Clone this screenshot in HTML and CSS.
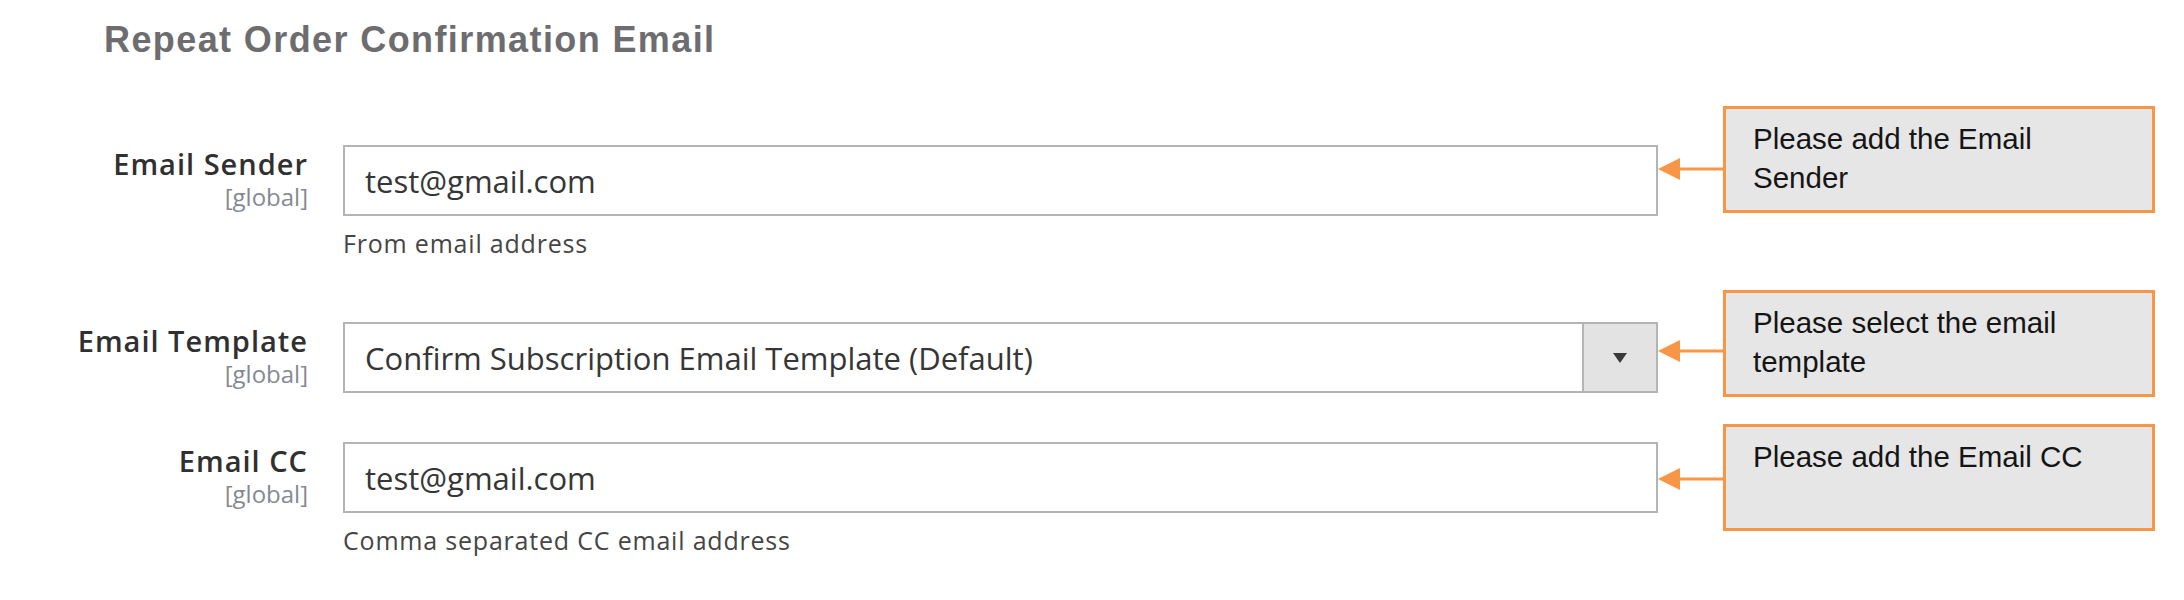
FILE: index.html
```html
<!DOCTYPE html>
<html lang="en">
<head>
<meta charset="utf-8">
<title>Repeat Order Confirmation Email</title>
<link rel="stylesheet" href="styles.css">
</head>
<body>
<div class="page">
  <h2 class="title">Repeat Order Confirmation Email</h2>

  <div class="form">
    <div class="field field-sender">
      <div class="label-col">
        <div class="label">Email Sender</div>
        <div class="scope">[global]</div>
      </div>
      <div class="control">
        <div class="input">test@gmail.com</div>
        <div class="note">From email address</div>
      </div>
      <div class="annot annot-sender">
        <svg class="arrow" width="65" height="24" viewBox="0 0 65 24"><line x1="18" y1="12" x2="65" y2="12" stroke="#f79646" stroke-width="3"/><polygon points="0,12 22,1 22,23" fill="#f79646"/></svg>
        <div class="callout">Please add the Email Sender</div>
      </div>
    </div>

    <div class="field field-template">
      <div class="label-col">
        <div class="label">Email Template</div>
        <div class="scope">[global]</div>
      </div>
      <div class="control">
        <div class="select">
          <div class="select-value">Confirm Subscription Email Template (Default)</div>
          <div class="select-btn"><span class="caret"></span></div>
        </div>
      </div>
      <div class="annot annot-template">
        <svg class="arrow" width="65" height="24" viewBox="0 0 65 24"><line x1="18" y1="12" x2="65" y2="12" stroke="#f79646" stroke-width="3"/><polygon points="0,12 22,1 22,23" fill="#f79646"/></svg>
        <div class="callout">Please select the email template</div>
      </div>
    </div>

    <div class="field field-cc">
      <div class="label-col">
        <div class="label">Email CC</div>
        <div class="scope">[global]</div>
      </div>
      <div class="control">
        <div class="input">test@gmail.com</div>
        <div class="note">Comma separated CC email address</div>
      </div>
      <div class="annot annot-cc">
        <svg class="arrow" width="65" height="24" viewBox="0 0 65 24"><line x1="18" y1="12" x2="65" y2="12" stroke="#f79646" stroke-width="3"/><polygon points="0,12 22,1 22,23" fill="#f79646"/></svg>
        <div class="callout">Please add the Email CC</div>
      </div>
    </div>
  </div>
</div>
</body>
</html>
```

FILE: styles.css
```css
html, body {
  margin: 0;
  padding: 0;
  background: #ffffff;
}

.page {
  width: 2184px;
  height: 600px;
  overflow: hidden;
}

.title {
  margin: 0;
  padding: 22px 0 0 104px;
  font-family: "Liberation Sans", Arial, sans-serif;
  font-weight: bold;
  font-size: 36px;
  line-height: 36px;
  letter-spacing: 1.4px;
  color: #6d6d6f;
}

.form {
  margin-top: 87px;
  display: flex;
  flex-direction: column;
}

.field {
  display: flex;
  align-items: flex-start;
  margin-bottom: 49px;
}

.label-col {
  width: 308px;
  text-align: right;
  font-family: "Open Sans", sans-serif;
}

.label {
  padding-top: 2px;
  font-size: 29px;
  line-height: 34px;
  font-weight: 600;
  letter-spacing: 1px;
  color: #303030;
}

.scope {
  margin-top: 2px;
  font-size: 24px;
  line-height: 28px;
  color: #858a92;
}

.control {
  margin-left: 35px;
  width: 1315px;
  font-family: "Open Sans", sans-serif;
}

.input,
.select {
  box-sizing: border-box;
  height: 71px;
  border: 2px solid #b4b4b4;
  background: #ffffff;
  font-size: 31px;
  color: #363636;
}

.input {
  display: flex;
  align-items: center;
  padding-left: 20px;
}

.select {
  display: flex;
  align-items: stretch;
}

.select-value {
  flex: 1;
  display: flex;
  align-items: center;
  padding-left: 20px;
}

.select-btn {
  box-sizing: border-box;
  width: 74px;
  border-left: 2px solid #b4b4b4;
  background: #e3e3e3;
  display: flex;
  align-items: center;
  justify-content: center;
}

.caret {
  width: 0;
  height: 0;
  border-left: 7px solid transparent;
  border-right: 7px solid transparent;
  border-top: 10px solid #3a3a3a;
}

.note {
  margin-top: 10px;
  font-size: 25px;
  line-height: 35px;
  letter-spacing: 0.8px;
  color: #454545;
}

.field-sender .note {
  margin-bottom: 12px;
}

.annot {
  display: flex;
  align-items: flex-start;
  margin-bottom: -300px;
}

.annot-sender { margin-top: -39px; }
.annot-template { margin-top: -32px; }
.annot-cc { margin-top: -18px; }

.annot-sender .arrow { margin-top: 51px; }
.annot-template .arrow { margin-top: 49px; }
.annot-cc .arrow { margin-top: 43px; }

.arrow {
  display: block;
  flex: none;
}

.callout {
  box-sizing: border-box;
  width: 432px;
  height: 107px;
  border: 3px solid #f79646;
  background: #e6e6e6;
  padding: 10px 48px 0 27px;
  font-family: "Liberation Sans", Arial, sans-serif;
  font-size: 29.5px;
  line-height: 39px;
  color: #151515;
}
```
